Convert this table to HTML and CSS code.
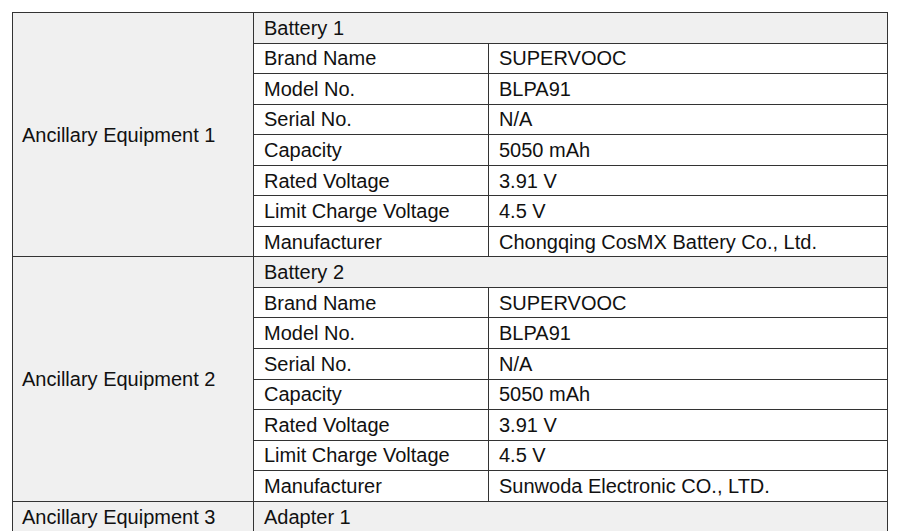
FILE: index.html
```html
<!DOCTYPE html>
<html>
<head>
<meta charset="utf-8">
<link rel="stylesheet" href="styles.css">
</head>
<body>
<table class="spec">
  <colgroup>
    <col class="c1"><col class="c2"><col class="c3">
  </colgroup>
  <tbody>
    <tr><td class="equip" rowspan="8">Ancillary Equipment 1</td><td class="head" colspan="2">Battery 1</td></tr>
    <tr><td>Brand Name</td><td>SUPERVOOC</td></tr>
    <tr><td>Model No.</td><td>BLPA91</td></tr>
    <tr><td>Serial No.</td><td>N/A</td></tr>
    <tr><td>Capacity</td><td>5050 mAh</td></tr>
    <tr><td>Rated Voltage</td><td>3.91 V</td></tr>
    <tr><td>Limit Charge Voltage</td><td>4.5 V</td></tr>
    <tr><td>Manufacturer</td><td>Chongqing CosMX Battery Co., Ltd.</td></tr>
    <tr><td class="equip" rowspan="8">Ancillary Equipment 2</td><td class="head" colspan="2">Battery 2</td></tr>
    <tr><td>Brand Name</td><td>SUPERVOOC</td></tr>
    <tr><td>Model No.</td><td>BLPA91</td></tr>
    <tr><td>Serial No.</td><td>N/A</td></tr>
    <tr><td>Capacity</td><td>5050 mAh</td></tr>
    <tr><td>Rated Voltage</td><td>3.91 V</td></tr>
    <tr><td>Limit Charge Voltage</td><td>4.5 V</td></tr>
    <tr><td>Manufacturer</td><td>Sunwoda Electronic CO., LTD.</td></tr>
    <tr><td class="equip">Ancillary Equipment 3</td><td class="head" colspan="2">Adapter 1</td></tr>
  </tbody>
</table>
</body>
</html>
```
FILE: styles.css
```css
html, body {
  margin: 0;
  padding: 0;
  background: #ffffff;
}
body {
  padding: 12px 0 0 12px;
  font-family: "Liberation Sans", Arial, sans-serif;
  font-size: 20px;
  color: #111111;
}
.spec {
  border-collapse: collapse;
  width: 875px;
  table-layout: fixed;
  border: 1px solid #222222;
}
.c1 { width: 241px; }
.c2 { width: 235px; }
.c3 { width: 399px; }
.spec td {
  border: 1px solid #333333;
  padding: 0 0 0 10px;
  height: 29.56px;
  line-height: 20px;
  vertical-align: middle;
  white-space: nowrap;
  background: #ffffff;
}
.spec td.equip {
  background: #f0f0f0;
  padding-left: 9px;
}
.spec td.head {
  background: #f0f0f0;
}
```
